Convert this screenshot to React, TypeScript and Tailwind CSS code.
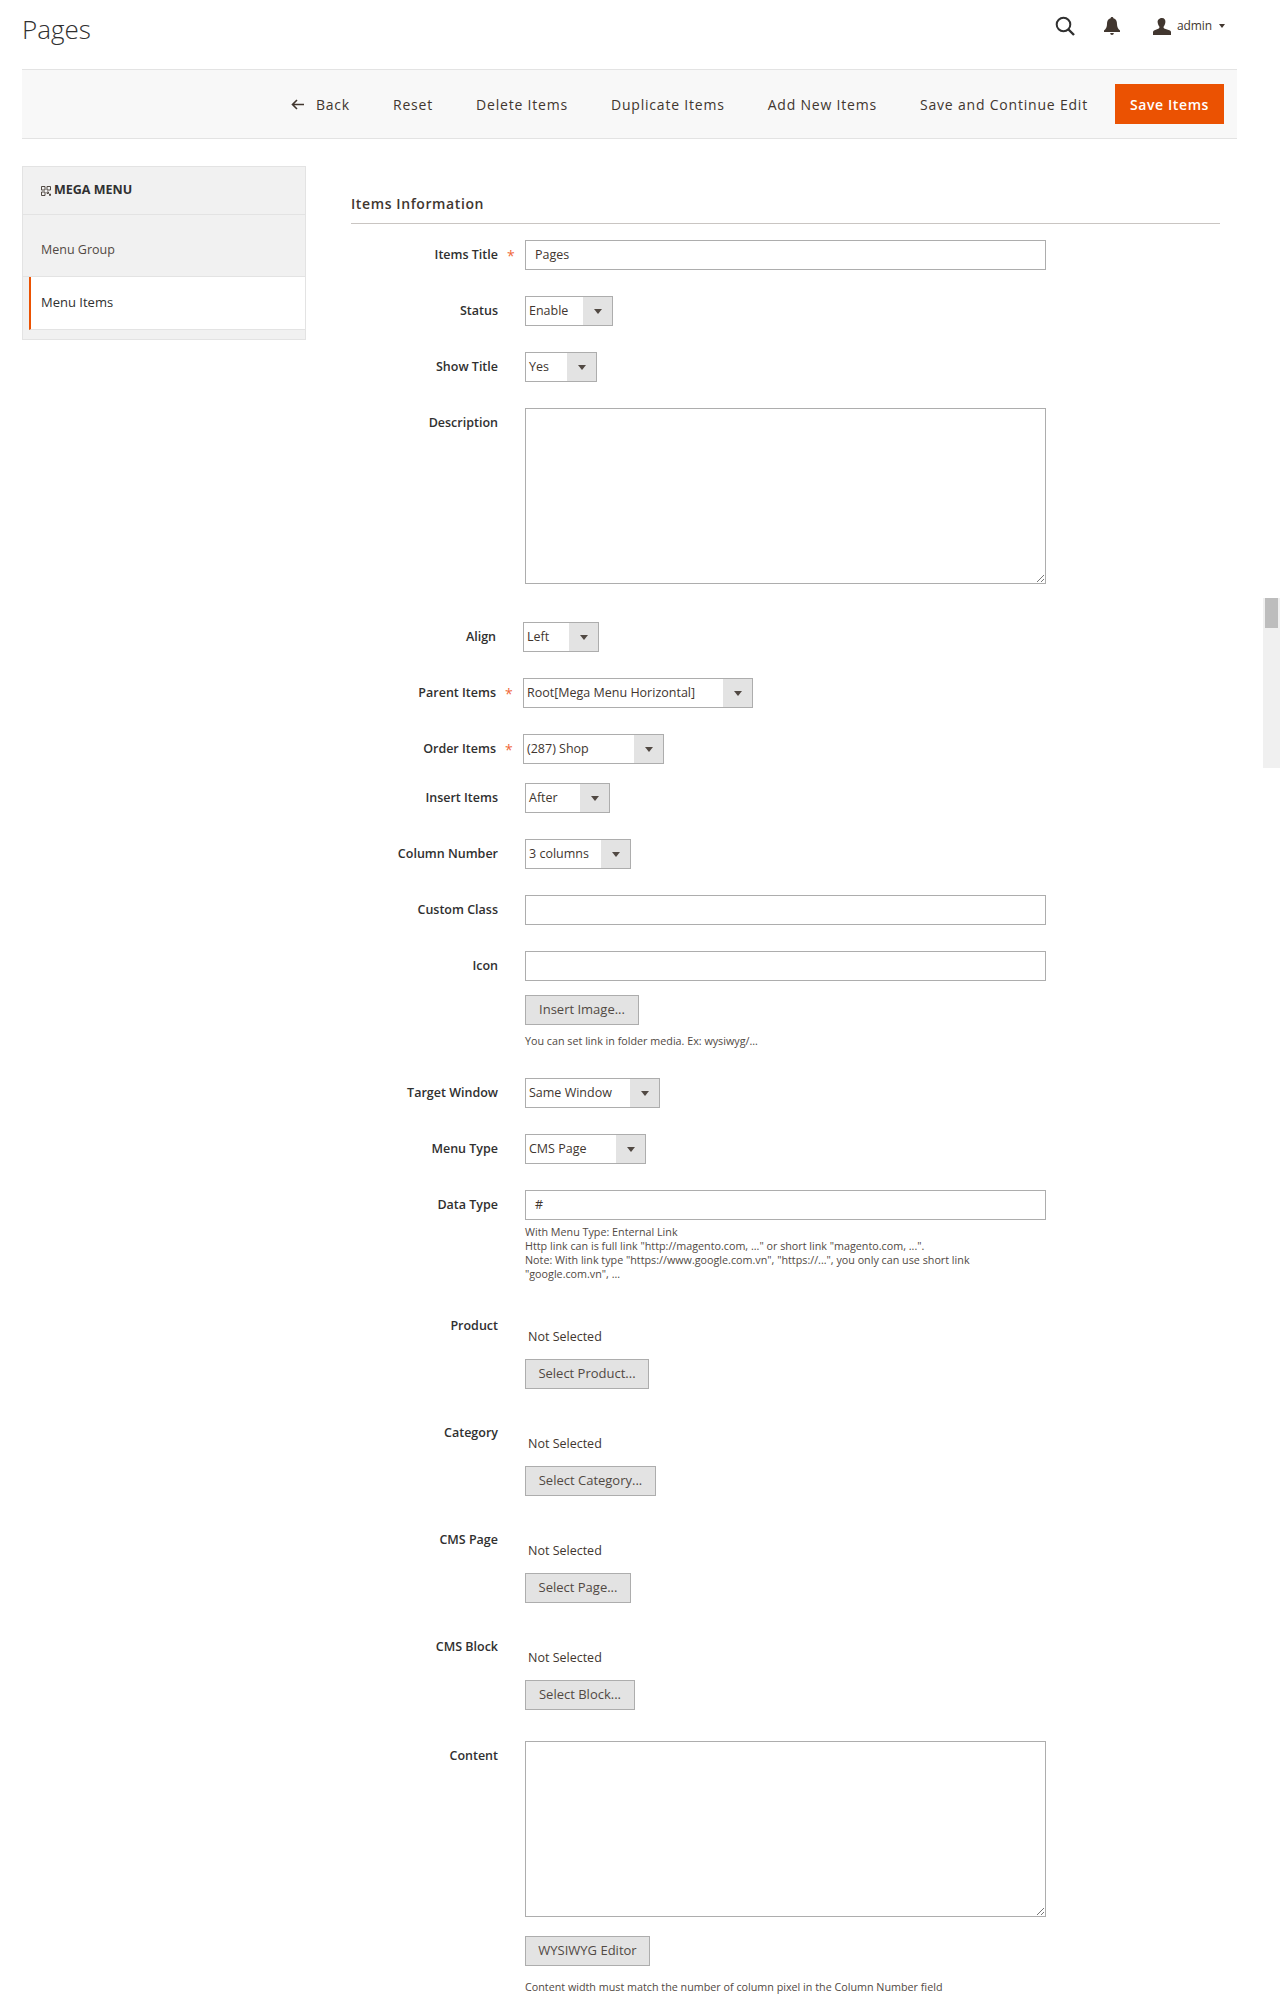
import type { ReactNode } from "react";

function Label({ text, required, shifted }: { text: string; required?: boolean; shifted?: boolean }) {
    return (
        <>
            <div className={(shifted ? "w-[145px]" : "w-[147px]") + " shrink-0 text-right text-[12.5px] font-semibold leading-[30px] text-[#303030]"}>{text}</div>
            <div className="h-[30px] w-[27px] shrink-0 pl-[9px] text-[14px] leading-[32px] text-[#f0693b]">{required ? "*" : ""}</div>
        </>
    );
}

function Select({ value, className }: { value: string; className: string }) {
    return (
        <div className={"flex h-[30px] border border-[#adadad] bg-white text-[12.5px] text-[#41362f] " + className}>
            <span className="flex-1 pl-[3px] leading-[28px]">{value}</span>
            <span className="flex w-[29px] items-center justify-center bg-[#e3e3e3]">
                <svg width="8" height="5" viewBox="0 0 8 5"><path d="M0 0h8L4 5z" fill="#514943" /></svg>
            </span>
        </div>
    );
}

function TextBox({ value = "" }: { value?: string }) {
    return <div className="h-[30px] w-[521px] border border-[#adadad] bg-white pl-[9px] text-[12.5px] leading-[28px] text-[#41362f]">{value}</div>;
}

function TextArea() {
    return (
        <div className="relative h-[176px] w-[521px] border border-[#adadad] bg-white">
            <svg className="absolute bottom-0 right-0" width="10" height="10" viewBox="0 0 10 10">
                <path d="M9 2 2 9M9 6 6 9" stroke="#777" strokeWidth="1" fill="none" />
            </svg>
        </div>
    );
}

function Btn({ children, className }: { children: ReactNode; className: string }) {
    return <div className={"flex h-[30px] items-center justify-center border border-[#adadad] bg-[#e3e3e3] text-[13px] font-medium text-[#514943] " + className}>{children}</div>;
}

function Row({ children, className = "" }: { children: ReactNode; className?: string }) {
    return <div className={"flex items-start " + className}>{children}</div>;
}

function Picker({ label, button, width, className }: { label: string; button: string; width: string; className: string }) {
    return (
        <Row className={className}>
            <Label text={label} />
            <div>
                <div className="mt-[16px] pl-[3px] text-[12.5px] leading-[20px] text-[#41362f]">Not Selected</div>
                <Btn className={"mt-[12px] " + width}>{button}</Btn>
            </div>
        </Row>
    );
}

export default function App() {
    const toolbarItem = "text-[14px] font-medium tracking-[0.8px] text-[#41362f]";

    return (
        <div className="relative h-[1994px] w-full overflow-hidden bg-white font-['Open_Sans',sans-serif]">
            {/* top bar */}
            <div className="flex h-[69px] items-start justify-between pl-[22px] pr-[61px]">
                <h1 className="mt-[11px] text-[26px] font-light leading-[36px] text-[#303030]">Pages</h1>
                <div className="mt-[16px] flex items-center">
                    <svg width="20" height="20" viewBox="0 0 20 20" fill="none" stroke="#303030" strokeWidth="2">
                        <circle cx="8.5" cy="8.5" r="6.8" />
                        <path d="m13.5 13.5 5.5 5.5" strokeWidth="2.4" />
                    </svg>
                    <svg className="ml-[29px]" width="16" height="18" viewBox="0 0 16 18" fill="#41362f">
                        <path d="M8 0c1 0 1.400.6 1.400 1.300C12 2 13 4 13 7c0 3 1 5 3 6.500V15H0v-1.500C2 12 3 10 3 7c0-3 1-5 3.600-5.700C6.600.6 7 0 8 0ZM6.200 16h3.600c0 1-.8 2-1.800 2s-1.800-1-1.800-2Z" />
                    </svg>
                    <svg className="ml-[33px]" width="18" height="17" viewBox="0 0 18 17" fill="#41362f">
                        <path d="M9 0c2.400 0 3.600 1.700 3.400 4-.2 2-1 3.600-1.700 4.500-.3.600-.2 1.500.5 1.900L17 12.500c.7.400 1 1 1 1.800V17H0v-2.700c0-.8.300-1.400 1-1.800l4.800-2.100c.7-.4.800-1.300.5-1.900C5.600 7.600 4.800 6 4.600 4 4.400 1.700 6.600 0 9 0Z" />
                    </svg>
                    <span className="ml-[6px] text-[12px] tracking-[-0.1px] text-[#41362f]">admin</span>
                    <svg className="ml-[7px]" width="6" height="4" viewBox="0 0 6 4"><path d="M0 0h6L3 4z" fill="#41362f" /></svg>
                </div>
            </div>

            {/* actions */}
            <div className="ml-[22px] flex h-[70px] w-[1215px] items-center justify-end gap-[43px] border-y border-[#e3e3e3] bg-[#f8f8f8] pr-[13px]">
                <div className={"flex items-center gap-[12px] " + toolbarItem}>
                    <svg width="13" height="11" viewBox="0 0 13 11" fill="none" stroke="#41362f" strokeWidth="1.600">
                        <path d="M13 5.500H1.500M6 1 1.500 5.500 6 10" />
                    </svg>
                    Back
                </div>
                <div className={toolbarItem}>Reset</div>
                <div className={toolbarItem}>Delete Items</div>
                <div className={toolbarItem}>Duplicate Items</div>
                <div className={toolbarItem}>Add New Items</div>
                <div className={toolbarItem}>Save and Continue Edit</div>
                <div className="-ml-[16px] flex h-[40px] w-[109px] items-center justify-center bg-[#eb5202] text-[14px] font-semibold tracking-[0.6px] text-white">Save Items</div>
            </div>

            <div className="ml-[22px] mt-[27px] flex items-start gap-[45px]">
                {/* sidebar */}
                <div className="h-[174px] w-[284px] shrink-0 border border-[#e3e3e3] bg-[#f1f1f1]">
                    <div className="flex h-[48px] items-center gap-[3px] border-b border-[#e3e3e3] pl-[18px] text-[12.5px] font-bold text-[#303030]">
                        <svg width="10" height="10" viewBox="0 0 10 10" fill="none" stroke="#514943" strokeWidth="1">
                            <path d="M.5.500h3.500v3.500H.5zM6 .500h3.500v3.500H6zM.5 6h3.500v3.500H.5zM6 6h1.500v1.500H6zM8.500 8h1v1.500h-1z" />
                        </svg>
                        MEGA MENU
                    </div>
                    <div className="flex h-[62px] items-center border-b border-[#e3e3e3] pl-[18px] pt-[10px] text-[12.500px] text-[#514943]">Menu Group</div>
                    <div className="ml-[6px] flex h-[53px] items-center border-b border-l-2 border-b-[#e3e3e3] border-l-[#eb5202] bg-white pl-[10px] text-[13px] text-[#303030]">Menu Items</div>
                </div>

                {/* form */}
                <div className="w-[869px]">
                    <div className="mb-[16px] border-b border-[#c9c5c2] pb-[9px] pt-[28px] text-[14px] font-semibold leading-[20px] tracking-[0.6px] text-[#41362f]">Items Information</div>

                    <Row>
                        <Label text="Items Title" required />
                        <TextBox value="Pages" />
                    </Row>
                    <Row className="mt-[26px]">
                        <Label text="Status" />
                        <Select value="Enable" className="w-[88px]" />
                    </Row>
                    <Row className="mt-[26px]">
                        <Label text="Show Title" />
                        <Select value="Yes" className="w-[72px]" />
                    </Row>
                    <Row className="mt-[26px]">
                        <Label text="Description" />
                        <TextArea />
                    </Row>
                    <Row className="mt-[38px]">
                        <Label text="Align" shifted />
                        <Select value="Left" className="w-[76px]" />
                    </Row>
                    <Row className="mt-[26px]">
                        <Label text="Parent Items" required shifted />
                        <Select value="Root[Mega Menu Horizontal]" className="w-[230px]" />
                    </Row>
                    <Row className="mt-[26px]">
                        <Label text="Order Items" required shifted />
                        <Select value="(287) Shop" className="w-[141px]" />
                    </Row>
                    <Row className="mt-[19px]">
                        <Label text="Insert Items" />
                        <Select value="After" className="w-[85px]" />
                    </Row>
                    <Row className="mt-[26px]">
                        <Label text="Column Number" />
                        <Select value="3 columns" className="w-[106px]" />
                    </Row>
                    <Row className="mt-[26px]">
                        <Label text="Custom Class" />
                        <TextBox />
                    </Row>
                    <Row className="mt-[26px]">
                        <Label text="Icon" />
                        <div>
                            <TextBox />
                            <Btn className="mt-[14px] w-[114px]">Insert Image...</Btn>
                            <div className="mt-[9px] text-[10.750px] leading-[14px] text-[#514943]">You can set link in folder media. Ex: wysiwyg/...</div>
                        </div>
                    </Row>
                    <Row className="mt-[30px]">
                        <Label text="Target Window" />
                        <Select value="Same Window" className="w-[135px]" />
                    </Row>
                    <Row className="mt-[26px]">
                        <Label text="Menu Type" />
                        <Select value="CMS Page" className="w-[121px]" />
                    </Row>
                    <Row className="mt-[26px]">
                        <Label text="Data Type" />
                        <div className="w-[520px]">
                            <TextBox value="#" />
                            <div className="mt-[5px] text-[10.750px] leading-[14px] text-[#514943]">
                                With Menu Type: Enternal Link<br />
                                Http link can is full link "http://magento.com, ..." or short link "magento.com, ...".<br />
                                Note: With link type "https://www.google.com.vn", "https://...", you only can use short link<br />
                                "google.com.vn", ...
                            </div>
                        </div>
                    </Row>

                    <Picker label="Product" button="Select Product..." width="w-[124px]" className="mt-[30px]" />
                    <Picker label="Category" button="Select Category..." width="w-[131px]" className="mt-[29px]" />
                    <Picker label="CMS Page" button="Select Page..." width="w-[106px]" className="mt-[29px]" />
                    <Picker label="CMS Block" button="Select Block..." width="w-[110px]" className="mt-[29px]" />

                    <Row className="mt-[31px]">
                        <Label text="Content" />
                        <div>
                            <TextArea />
                            <Btn className="mt-[19px] w-[125px]">WYSIWYG Editor</Btn>
                            <div className="mt-[14px] text-[10.750px] leading-[14px] text-[#514943]">Content width must match the number of column pixel in the Column Number field</div>
                        </div>
                    </Row>
                </div>
            </div>

            {/* scroll rail of the embedded frame */}
            <div className="absolute left-[1263px] top-[598px] h-[170px] w-[17px] bg-[#f0f0f0] px-[2px]">
                <div className="h-[30px] w-[13px] bg-[#bdbdbd]" />
            </div>
        </div>
    );
}
